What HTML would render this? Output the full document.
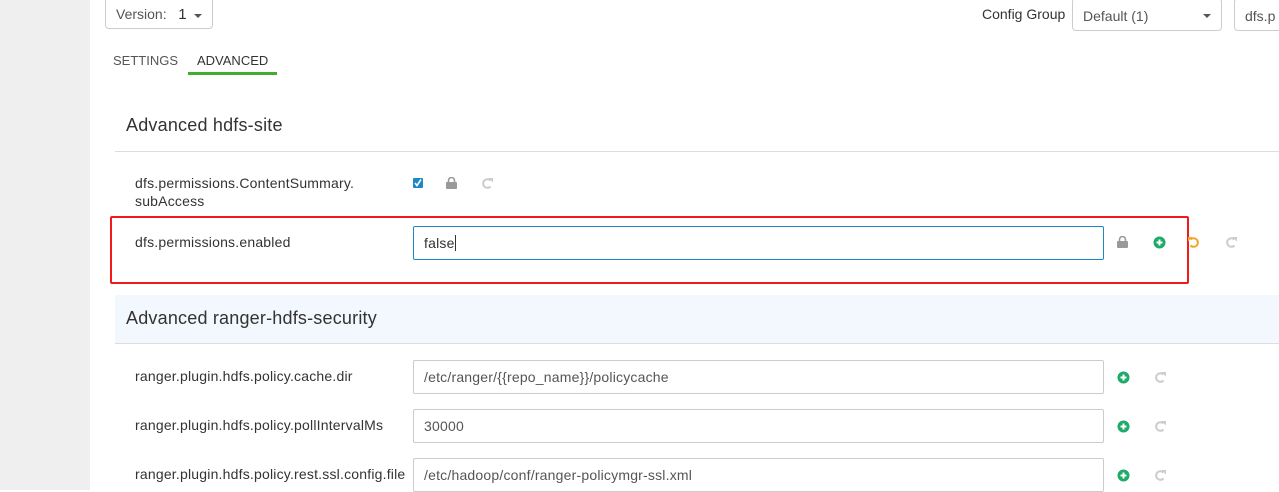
<!DOCTYPE html>
<html><head><meta charset="utf-8"><style>
*{box-sizing:border-box;margin:0;padding:0}
body{width:1279px;height:490px;overflow:hidden;background:#fff;font-family:"Liberation Sans",Arial,sans-serif;color:#333;position:relative}
.a{position:absolute}
.side{left:0;top:0;width:90px;height:490px;background:#efefef}
.btn{border:1px solid #ccc;border-radius:4px;background:#fff}
.lbl{font-size:14px;color:#333;letter-spacing:0.2px}
.inp{border:1px solid #ccc;border-radius:2px;height:34px;font-size:14px;color:#555;padding:8px 10px;background:#fff;letter-spacing:0.2px}
.caret{width:0;height:0;border-left:4px solid transparent;border-right:4px solid transparent;border-top:4px solid #555}
</style></head><body>
<div class="a side"></div>
<div class="a btn" style="left:105px;top:-4px;width:108px;height:33px"></div>
<div class="a" style="left:116px;top:6px;font-size:14px;color:#555">Version:&nbsp;&nbsp; <span style="color:#333;font-size:15px">1</span></div>
<div class="a caret" style="left:194px;top:14px"></div>
<div class="a" style="left:982px;top:6px;font-size:14px">Config Group</div>
<div class="a btn" style="left:1072px;top:-2px;width:150px;height:33px"></div>
<div class="a" style="left:1083px;top:8px;font-size:14px;color:#555">Default (1)</div>
<div class="a caret" style="left:1203px;top:14px"></div>
<div class="a btn" style="left:1234px;top:-2px;width:60px;height:33px"></div>
<div class="a" style="left:1245px;top:8px;font-size:14px;color:#555">dfs.p</div>
<div class="a" style="left:113px;top:53px;font-size:13px;color:#555">SETTINGS</div>
<div class="a" style="left:197px;top:53px;font-size:13px;color:#333">ADVANCED</div>
<div class="a" style="left:188px;top:72px;width:89px;height:3px;background:#3fae2a"></div>
<div class="a" style="left:126px;top:115px;font-size:18px;color:#333;letter-spacing:0.2px">Advanced hdfs-site</div>
<div class="a" style="left:115px;top:151px;width:1164px;height:1px;background:#ddd"></div>
<div class="a lbl" style="left:135px;top:174px;line-height:18px">dfs.permissions.ContentSummary.<br>subAccess</div>
<svg class="a" style="left:413px;top:178px" width="10" height="10"><rect width="10" height="10" rx="1" fill="#1e88c7"/><path d="M2 5l2 2.5 4-6" stroke="#fff" stroke-width="1.6" fill="none"/></svg>
<svg class="a" style="left:446px;top:177px" width="11" height="12"><path d="M2.5 5V3.5a3 3 0 0 1 6 0V5" stroke="#999" stroke-width="1.6" fill="none"/><rect y="5" width="11" height="7" rx="1" fill="#999"/></svg>
<svg class="a" style="left:481px;top:177px" width="13" height="13"><path d="M9.5 3.5A4.3 4.3 0 1 0 9.5 9.5" stroke="#ccc" stroke-width="2" fill="none"/><path d="M7.5 1L12 1 12 5.5z" fill="#ccc"/></svg>
<div class="a" style="left:110px;top:216px;width:1079px;height:68px;border:2px solid #f21a1a;border-radius:2px"></div>
<div class="a lbl" style="left:135px;top:234px">dfs.permissions.enabled</div>
<div class="a inp" style="left:413px;top:226px;width:691px;border-color:#1e88c7;color:#333">false<span style="display:inline-block;width:1px;height:16px;background:#333;vertical-align:-3px"></span></div>
<svg class="a" style="left:1117px;top:236px" width="11" height="12"><path d="M2.5 5V3.5a3 3 0 0 1 6 0V5" stroke="#999" stroke-width="1.6" fill="none"/><rect y="5" width="11" height="7" rx="1" fill="#999"/></svg>
<svg class="a" style="left:1153px;top:236px" width="13" height="13"><circle cx="6.5" cy="6.5" r="6" fill="#1eab67"/><path d="M6.5 3.5v6M3.5 6.5h6" stroke="#fff" stroke-width="2"/></svg>
<svg class="a" style="left:1187px;top:236px" width="13" height="13"><path d="M3.5 3.5A4.3 4.3 0 1 1 3.5 9.5" stroke="#f0a72a" stroke-width="2" fill="none"/><path d="M5.5 1L1 1 1 5.5z" fill="#f0a72a"/></svg>
<svg class="a" style="left:1225px;top:236px" width="13" height="13"><path d="M9.5 3.5A4.3 4.3 0 1 0 9.5 9.5" stroke="#ccc" stroke-width="2" fill="none"/><path d="M7.5 1L12 1 12 5.5z" fill="#ccc"/></svg>
<div class="a" style="left:115px;top:295px;width:1164px;height:49px;background:#f2f8fd;border-bottom:1px solid #ddd"></div>
<div class="a" style="left:126px;top:308px;font-size:18px;color:#333;letter-spacing:0.2px">Advanced ranger-hdfs-security</div>
<div class="a lbl" style="left:135px;top:368px">ranger.plugin.hdfs.policy.cache.dir</div>
<div class="a inp" style="left:413px;top:360px;width:691px">/etc/ranger/{{repo_name}}/policycache</div>
<div class="a lbl" style="left:135px;top:417px">ranger.plugin.hdfs.policy.pollIntervalMs</div>
<div class="a inp" style="left:413px;top:409px;width:691px">30000</div>
<div class="a lbl" style="left:135px;top:466px">ranger.plugin.hdfs.policy.rest.ssl.config.file</div>
<div class="a inp" style="left:413px;top:458px;width:691px">/etc/hadoop/conf/ranger-policymgr-ssl.xml</div>
<svg class="a" style="left:1117px;top:371px" width="13" height="13"><circle cx="6.5" cy="6.5" r="6" fill="#1eab67"/><path d="M6.5 3.5v6M3.5 6.5h6" stroke="#fff" stroke-width="2"/></svg>
<svg class="a" style="left:1154px;top:371px" width="13" height="13"><path d="M9.5 3.5A4.3 4.3 0 1 0 9.5 9.5" stroke="#ccc" stroke-width="2" fill="none"/><path d="M7.5 1L12 1 12 5.5z" fill="#ccc"/></svg>
<svg class="a" style="left:1117px;top:420px" width="13" height="13"><circle cx="6.5" cy="6.5" r="6" fill="#1eab67"/><path d="M6.5 3.5v6M3.5 6.5h6" stroke="#fff" stroke-width="2"/></svg>
<svg class="a" style="left:1154px;top:420px" width="13" height="13"><path d="M9.5 3.5A4.3 4.3 0 1 0 9.5 9.5" stroke="#ccc" stroke-width="2" fill="none"/><path d="M7.5 1L12 1 12 5.5z" fill="#ccc"/></svg>
<svg class="a" style="left:1117px;top:469px" width="13" height="13"><circle cx="6.5" cy="6.5" r="6" fill="#1eab67"/><path d="M6.5 3.5v6M3.5 6.5h6" stroke="#fff" stroke-width="2"/></svg>
<svg class="a" style="left:1154px;top:469px" width="13" height="13"><path d="M9.5 3.5A4.3 4.3 0 1 0 9.5 9.5" stroke="#ccc" stroke-width="2" fill="none"/><path d="M7.5 1L12 1 12 5.5z" fill="#ccc"/></svg>
</body></html>
